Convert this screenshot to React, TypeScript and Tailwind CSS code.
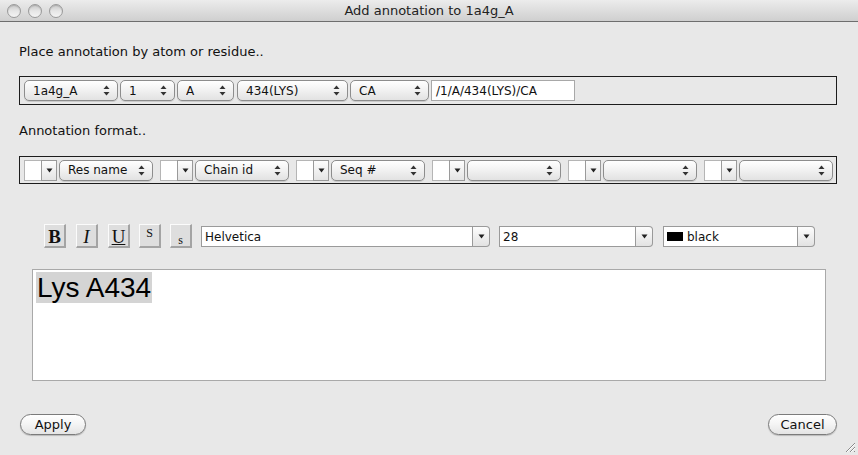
import React from "react";

const font = { fontFamily: '"DejaVu Sans", "Liberation Sans", Arial, sans-serif' };

function Stepper() {
  return (
    <svg width="7" height="11" viewBox="0 0 7 11" className="shrink-0">
      <path d="M3.5 0.5 L6.5 4 L0.5 4 Z" fill="#333" />
      <path d="M3.5 10.5 L6.5 7 L0.5 7 Z" fill="#333" />
    </svg>
  );
}

function Down() {
  return (
    <svg width="7" height="5" viewBox="0 0 7 5">
      <path d="M0.5 0.5 L6.5 0.5 L3.5 4.5 Z" fill="#222" />
    </svg>
  );
}

function Popup({ label, w }: { label: string; w: string }) {
  return (
    <div
      className={`${w} h-[21px] shrink-0 rounded-[5px] border border-[#8d8d8d] bg-gradient-to-b from-[#ffffff] via-[#f1f1f1] to-[#e2e2e2] flex items-center pl-[8px] pr-[7px] text-[12px] text-[#111] shadow-[0_1px_0_rgba(0,0,0,0.12)]`}
    >
      <span className="flex-1 truncate leading-[16px]">{label}</span>
      <Stepper />
    </div>
  );
}

function FmtGroup({ label }: { label: string }) {
  return (
    <div className="flex items-center shrink-0">
      <div className="w-[17px] h-[21px] bg-white border border-[#b5b5b5] border-r-0" />
      <div className="w-[16px] h-[21px] border border-[#9a9a9a] bg-gradient-to-b from-[#fdfdfd] to-[#e4e4e4] flex items-center justify-center">
        <Down />
      </div>
      <div className="ml-[2px]">
        <Popup label={label} w="w-[94px]" />
      </div>
    </div>
  );
}

function Combo({ label, w, swatch }: { label: string; w: string; swatch?: boolean }) {
  return (
    <div className={`${w} h-[21px] flex shrink-0`}>
      <div className="flex-1 bg-white border border-[#9a9a9a] flex items-center pl-[3px] text-[12px] text-[#111]">
        {swatch && <span className="inline-block w-[16px] h-[9px] bg-black mr-[4px]" />}
        {label}
      </div>
      <div className="w-[17px] border border-l-0 border-[#9a9a9a] rounded-r-[4px] bg-gradient-to-b from-[#fdfdfd] to-[#e2e2e2] flex items-center justify-center">
        <Down />
      </div>
    </div>
  );
}

function StyleBtn({ children, cls }: { children: React.ReactNode; cls: string }) {
  return (
    <div
      className={`w-[22px] h-[24px] shrink-0 bg-[#dedede] border-t border-l border-t-[#fbfbfb] border-l-[#fbfbfb] border-b-2 border-r-2 border-b-[#a4a4a4] border-r-[#a4a4a4] flex justify-center text-[#111] ${cls}`}
      style={{ fontFamily: '"Liberation Serif", "Times New Roman", serif' }}
    >
      {children}
    </div>
  );
}

function Light() {
  return (
    <div className="w-[14px] h-[14px] rounded-full border border-[#9a9a9a] bg-gradient-to-b from-[#c9c9c9] via-[#e6e6e6] to-[#f4f4f4] shadow-[inset_0_1px_1px_rgba(0,0,0,0.15)]" />
  );
}

function PillBtn({ label, w }: { label: string; w: string }) {
  return (
    <div
      className={`${w} h-[21px] rounded-full border border-[#7b7b7b] bg-gradient-to-b from-[#ffffff] via-[#f4f4f4] to-[#e4e4e4] flex items-center justify-center text-[13px] text-[#111] shadow-[0_1px_1px_rgba(0,0,0,0.2)]`}
    >
      {label}
    </div>
  );
}

export default function App() {
  return (
    <div className="w-[858px] h-[455px] bg-[#e8e8e8] flex flex-col relative overflow-hidden" style={font}>
      {/* title bar */}
      <div className="h-[22px] shrink-0 border-b border-[#6e6e6e] bg-gradient-to-b from-[#ececec] to-[#cfcfcf] flex items-center relative">
        <div className="flex gap-[7px] pl-[7px]">
          <Light />
          <Light />
          <Light />
        </div>
        <div className="absolute inset-0 flex items-center justify-center text-[13px] text-[#222]">
          Add annotation to 1a4g_A
        </div>
      </div>

      <div className="flex flex-col pl-[19px] pr-[21px]">
        <div className="mt-[22px] h-[16px] leading-[16px] text-[13px] text-[#111]">
          Place annotation by atom or residue..
        </div>

        <div className="mt-[16px] h-[29px] border border-[#1c1c1c] flex items-center pl-[4px] gap-[2px]">
          <Popup label="1a4g_A" w="w-[94px]" />
          <Popup label="1" w="w-[55px]" />
          <Popup label="A" w="w-[57px]" />
          <div className="ml-[1px]">
            <Popup label="434(LYS)" w="w-[111px]" />
          </div>
          <Popup label="CA" w="w-[79px]" />
          <div className="w-[144px] h-[21px] bg-white border border-[#a8a8a8] flex items-center pl-[4px] text-[12px] text-[#111]">
            /1/A/434(LYS)/CA
          </div>
        </div>

        <div className="mt-[18px] h-[16px] leading-[16px] text-[13px] text-[#111]">Annotation format..</div>

        <div className="mt-[17px] h-[28px] border border-[#1c1c1c] flex items-center pl-[4px] gap-[7px]">
          <FmtGroup label="Res name" />
          <FmtGroup label="Chain id" />
          <FmtGroup label="Seq #" />
          <FmtGroup label="" />
          <FmtGroup label="" />
          <FmtGroup label="" />
        </div>

        {/* toolbar */}
        <div className="mt-[39px] flex items-end pl-[25px] h-[25px]">
          <StyleBtn cls="text-[19px] font-bold leading-[24px]">B</StyleBtn>
          <div className="ml-[10px]">
            <StyleBtn cls="text-[19px] italic leading-[24px]">I</StyleBtn>
          </div>
          <div className="ml-[10px]">
            <StyleBtn cls="text-[19px] underline leading-[24px]">U</StyleBtn>
          </div>
          <div className="ml-[9px]">
            <StyleBtn cls="text-[12px] leading-[16px]">S</StyleBtn>
          </div>
          <div className="ml-[9px]">
            <StyleBtn cls="text-[12px] leading-[30px]">s</StyleBtn>
          </div>
          <div className="ml-[9px] mb-[1px]">
            <Combo label="Helvetica" w="w-[289px]" />
          </div>
          <div className="ml-[9px] mb-[1px]">
            <Combo label="28" w="w-[154px]" />
          </div>
          <div className="ml-[10px] mb-[1px]">
            <Combo label="black" w="w-[152px]" swatch />
          </div>
        </div>

        {/* text area */}
        <div className="mt-[21px] ml-[13px] w-[794px] h-[112px] bg-white border border-[#a9a9a9] pl-[3px] pt-[2px]">
          <span
            className="inline-block bg-[#d4d4d4] text-[28px] leading-[31px] text-black px-[1px]"
            style={{ fontFamily: '"Liberation Sans", Arial, sans-serif' }}
          >
            Lys A434
          </span>
        </div>

        {/* bottom buttons */}
        <div className="mt-[33px] flex justify-between pl-[1px]">
          <PillBtn label="Apply" w="w-[66px]" />
          <PillBtn label="Cancel" w="w-[69px]" />
        </div>
      </div>

      {/* resize grip */}
      <svg className="absolute right-[2px] bottom-[2px]" width="12" height="12" viewBox="0 0 12 12">
        <path d="M11 2 L2 11 M11 6 L6 11 M11 10 L10 11" stroke="#8a8a8a" strokeWidth="1" />
        <path d="M11 3 L3 11 M11 7 L7 11" stroke="#ffffff" strokeWidth="1" />
      </svg>
    </div>
  );
}
